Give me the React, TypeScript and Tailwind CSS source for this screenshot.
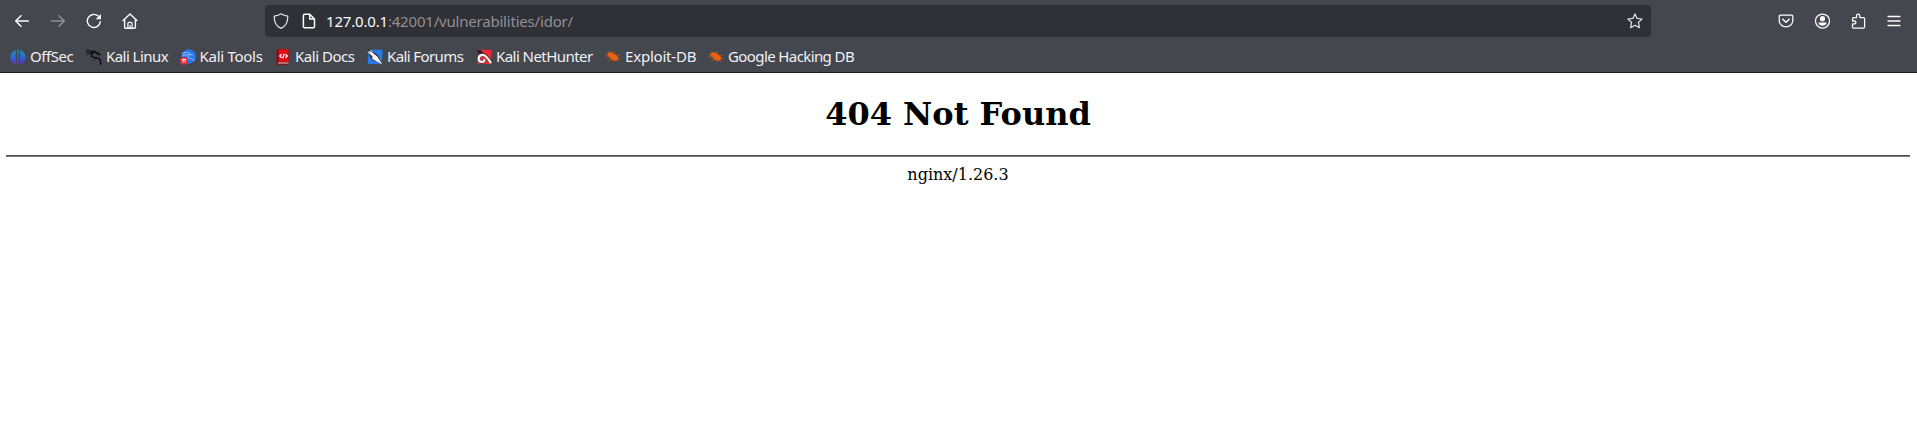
import React from "react";

type IconProps = { className?: string; children: React.ReactNode };

function Icon({ className = "", children }: IconProps) {
  return (
    <svg
      viewBox="0 0 16 16"
      className={`size-4 shrink-0 ${className}`}
      fill="none"
      stroke="currentColor"
      strokeWidth="1.25"
      strokeLinecap="round"
      strokeLinejoin="round"
    >
      {children}
    </svg>
  );
}

const icons = {
  back: <path d="M14.4 8H1.8M7 2.8 1.7 8 7 13.2" strokeWidth="1.5" />,
  forward: <path d="M1.6 8h12.6M9 2.8 14.3 8 9 13.2" strokeWidth="1.5" />,
  reload: (
    <>
      <path d="M14.3 8.6A6.5 6.5 0 1 1 12.2 3.1" strokeWidth="1.4" />
      <path d="M15 .9v5.4H9.7z" fill="currentColor" stroke="none" />
    </>
  ),
  home: (
    <>
      <path d="M1.1 7.6 8 1.1l6.9 6.5M2.6 6.4v7.9q0 .9.9.9h9q.9 0 .9-.9V6.4" strokeWidth="1.4" />
      <path d="M5.9 15v-4.500q0-1.100 1.100-1.100h2q1.100 0 1.100 1.100V15M8 12.300V15" />
    </>
  ),
  shield: <path d="M8 .8c2 1.400 4.200 2 6.700 2.300.3 5.600-1.600 10-6.700 12.300C2.900 13.100 1 8.700 1.300 3.100 3.800 2.800 6 2.200 8 .8z" />,
  page: <path d="M3.500 1.300h5.300l4.700 4.700v7.600q0 1.100-1.100 1.100H3.500q-1.100 0-1.100-1.100V2.400q0-1.100 1.100-1.100zM8.700 1.500v4.600h4.600" strokeWidth="1.500" />,
  star: <path d="m8 .9 2.100 4.500 5 .6-3.700 3.400 1 5.300L8 12.300l-4.400 2.400 1-5.300L.9 6l5-.6z" />,
  pocket: (
    <>
      <path d="M2.300 2.200h11.400q1.100 0 1.100 1.100v4.200a6.800 6.300 0 0 1-13.600 0V3.300q0-1.100 1.100-1.100z" />
      <path d="M4.800 6.200 8 9.300l3.200-3.100" strokeWidth="1.500" />
    </>
  ),
  account: (
    <>
      <circle cx="8.500" cy="8" r="7" />
      <circle cx="8.500" cy="5.700" r="2.600" fill="currentColor" stroke="none" />
      <path d="M4.300 9.500h8.400c-.3 2-2 3.300-4.200 3.300s-3.900-1.300-4.200-3.300z" fill="currentColor" stroke="none" />
    </>
  ),
  extension: (
    <path d="M2.600 8.200V5.400q0-.9.900-.9h3.100V2.600a1.600 1.600 0 0 1 3.200 0v1.900h3.700q1.100 0 1.100 1.100v8.400q0 1-1.100 1H3.400q-.9 0-.9-.9v-3.200h1.900a1.500 1.500 0 0 0 0-3z" />
  ),
  menu: <path d="M2 3.500h12M2 8h12M2 12.500h12" strokeWidth="1.300" />,
};

function OffSec() {
  return (
    <svg viewBox="0 0 16 16" className="size-4 shrink-0">
      <defs>
        <linearGradient id="offsec" x1="0" y1="0" x2="0" y2="1">
          <stop offset="0" stopColor="#159bb0" />
          <stop offset=".55" stopColor="#2f62d5" />
          <stop offset="1" stopColor="#642ed0" />
        </linearGradient>
      </defs>
      <path d="M5.800.9v14.200C-1.300 13.200-1.700 3.300 5.800.9zM10.200.9v14.200c7.100-1.900 7.500-11.800 0-14.200zM7.300.4h1.400v15.200H7.300z" fill="url(#offsec)" />
    </svg>
  );
}

function Dragon() {
  return (
    <svg viewBox="0 0 16 16" className="size-4 shrink-0" fill="none" stroke="#090a0c" strokeLinecap="round" strokeLinejoin="round">
      <path d="M.3 1c2.700.1 4.600.7 6.700 2M.3 3.400c2.300-.6 4.300-.4 6.500.4M1.500 5.800C3 4.500 5 4 7 4.400" strokeWidth=".9" />
      <path d="M5.800 3c2.400-.2 4.600.4 6 1.500M6.900 3.900C4.500 5.200 5 8 7.900 8.400c3.300.3 5.700.7 6.300 2.700.4 1.500-.1 2.200.8 4.200" strokeWidth="1.400" />
      <path d="m7.200 1.200 3.100 2 4.400 2.500-3.400-.1M10.500 9.300c-1.300.1-2 .7-2.300 1.600" strokeWidth=".9" />
    </svg>
  );
}

function Tools() {
  return (
    <svg viewBox="0 0 16 16" className="size-4 shrink-0">
      <circle cx="8.700" cy="7.500" r="7.200" fill="#2777ed" />
      <path d="M1.800 4.900c3.100-2 6.200-1.700 8.500.2M2.500 7c3-1.800 5-1.200 6.400-.6-1.500 2.200 0 3.100 2.500 3.300 1.700.1 2.500.9 2.900 2.200M9 4.900l3.700 1.500" fill="none" stroke="#b9d3fa" strokeWidth=".8" />
      <circle cx="3.900" cy="11.800" r="3.900" fill="#ef2933" />
      <path d="M1.900 10.500H6M3.100 10.500v3M5.100 10.500v3" fill="none" stroke="#fff" strokeWidth=".9" />
    </svg>
  );
}

function Docs() {
  return (
    <svg viewBox="0 0 16 16" className="size-4 shrink-0">
      <path d="M1.500 1 3 .2h10.500v15.500h-12z" fill="#870b10" />
      <path d="M3.500.2h10v12.700h-10z" fill="#e10c13" />
      <path d="M3 13.500h10.500v1H3z" fill="#d8cfd0" />
      <path d="M6.600 5.200 4.700 7l1.900 1.800M10.400 5.200 12.300 7l-1.900 1.800M9.300 4.800 7.700 9.200" fill="none" stroke="#fff" strokeWidth="1.200" />
    </svg>
  );
}

function Forums() {
  return (
    <svg viewBox="0 0 16 16" className="size-4 shrink-0">
      <path d="M1.800.7h14L14.500 15H.6z" fill="#2879ed" />
      <path d="M.3.300 3.500.7l7.300 5.500 4.900 9.200-4.900-1.900-6.600-3.400z" fill="#25282d" />
      <path d="m1 1.800 4.100 1.500 5.200 4.100 5.100 8-5.700-2.900-5.500-3.600 1.800-.3z" fill="#f4f4f4" />
      <path d="m.7 3 3.200 2.600M3 1l2.600 2" stroke="#f4f4f4" strokeWidth=".8" />
    </svg>
  );
}

function NetHunter() {
  return (
    <svg viewBox="0 0 16 16" className="size-4 shrink-0">
      <path d="M2.500.8h13.300L14.600 15H1.300z" fill="#ef2932" />
      <path d="M.2 1.700 4.100 1l3.300 2.400L3 5z" fill="#202226" />
      <path d="M14.800 13.500C11.500 8 9.200 5.200 6.200 5.700 1 6.700 1.200 13 6 12.900c1.900 0 2.900-1.300 2.200-2.800" fill="none" stroke="#25272b" strokeWidth="3.400" />
      <path d="M15 14.200C11.500 8.200 9.200 5.400 6.200 5.900 1.400 6.700 1.400 12.800 6 12.900c2 0 2.800-1.300 2.200-2.800" fill="none" stroke="#f5f5f5" strokeWidth="2.300" />
    </svg>
  );
}

function Exploit() {
  return (
    <svg viewBox="0 0 16 16" className="size-4 shrink-0">
      <path d="M2.700 4.300C4.200 2.700 7.600 3.200 9.500 5c2.400 1.200 3.500 2.800 3.800 4.800l-1.300 1.700C8.900 12.500 6 11 4.600 8.300L2.500 6.700z" fill="#eb600c" />
      <path d="m5 4-1.400-1.700M9 4.800l.4-2.500M11.500 7l2.700-.7M13 9.200l2.700.2M4.500 7.900l-3.700.3M6.300 10.400l-3.500 1.700M9.500 11.300l-1.200 1.800M12.500 11l1.200 1.700M3 5.700.5 4.800" fill="none" stroke="#c85919" strokeWidth=".8" />
    </svg>
  );
}

const bookmarks = [
  { label: "OffSec", icon: <OffSec />, box: "w-[76px]", track: "tracking-[-0.45px]" },
  { label: "Kali Linux", icon: <Dragon />, box: "w-[93.5px]", track: "tracking-[-0.55px]" },
  { label: "Kali Tools", icon: <Tools />, box: "w-[95.5px]", track: "tracking-[-0.28px]" },
  { label: "Kali Docs", icon: <Docs />, box: "w-[92px]", track: "tracking-[-0.48px]" },
  { label: "Kali Forums", icon: <Forums />, box: "w-[109px]", track: "tracking-[-0.6px]" },
  { label: "Kali NetHunter", icon: <NetHunter />, box: "w-[129px]", track: "tracking-[-0.55px]" },
  { label: "Exploit-DB", icon: <Exploit />, box: "w-[103px]", track: "tracking-[-0.2px]" },
  { label: "Google Hacking DB", icon: <Exploit />, box: "w-[160px]", track: "tracking-[-0.6px]" },
];

export default function App() {
  return (
    <div className="h-[447px] w-full overflow-hidden bg-white">
      <header className="h-[73px] border-b border-[#1c1b22] bg-[#45474f] font-['Noto_Sans',sans-serif] text-[#fbfbfe]">
        <div className="flex h-[42px] items-center">
          <nav className="flex w-[265px] gap-5 pl-[14px]">
            <Icon>{icons.back}</Icon>
            <Icon className="opacity-40">{icons.forward}</Icon>
            <Icon>{icons.reload}</Icon>
            <Icon>{icons.home}</Icon>
          </nav>
          <div className="flex h-8 w-[1386px] items-center rounded bg-[#303136] pr-2 pl-2">
            <Icon className="text-[#e2e2e5]">{icons.shield}</Icon>
            <Icon className="ml-3">{icons.page}</Icon>
            <span className="ml-[9px] text-[15px] leading-5 whitespace-pre text-[#8f9095]">
              <span className="tracking-[-0.18px] text-[#fbfbfe]">127.0.0.1</span>
              <span className="tracking-[-0.2px]">:42001/vulnerabilities/idor/</span>
            </span>
            <Icon className="ml-auto text-[#e2e2e5]">{icons.star}</Icon>
          </div>
          <div className="ml-[127px] flex gap-5">
            <Icon>{icons.pocket}</Icon>
            <Icon>{icons.account}</Icon>
            <Icon>{icons.extension}</Icon>
            <Icon>{icons.menu}</Icon>
          </div>
        </div>
        <div className="flex h-[30px] items-center pl-[10px]">
          {bookmarks.map((b) => (
            <div key={b.label} className={`flex shrink-0 items-center gap-1 ${b.box}`}>
              {b.icon}
              <span className={`pb-[2px] text-[15px] leading-5 whitespace-nowrap text-[#f0f0f4] ${b.track}`}>{b.label}</span>
            </div>
          ))}
        </div>
      </header>
      <main className="pr-[7px] pl-[6px] text-center font-['DejaVu_Serif',serif] text-black">
        <h1 className="pt-[22px] text-[32px] leading-[38px] font-bold">404 Not Found</h1>
        <hr className="mt-[22px] h-[2px] border-0 border-t border-[#4c4c4c] bg-[#777777]" />
        <p className="mt-[8px] text-[16px] leading-[19px]">nginx/1.26.3</p>
      </main>
    </div>
  );
}
